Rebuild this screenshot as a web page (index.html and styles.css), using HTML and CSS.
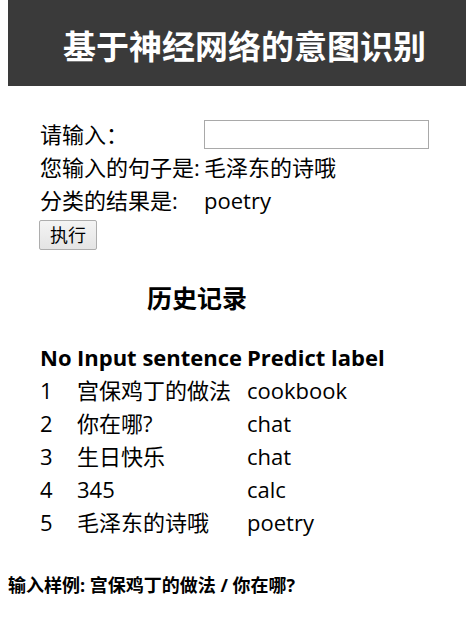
FILE: index.html
```html
<!DOCTYPE html>
<html lang="zh-CN">
<head>
<meta charset="utf-8">
<title>基于神经网络的意图识别</title>
<link rel="stylesheet" href="styles.css">
</head>
<body>
<header class="banner">
  <h1 class="banner-title">基于神经网络的意图识别</h1>
</header>
<main class="content">
  <table class="form-table">
    <tr class="form-row form-row-input">
      <td class="form-label">请输入：</td>
      <td class="form-value"><input class="text-input" type="text"></td>
    </tr>
    <tr class="form-row">
      <td class="form-label">您输入的句子是:</td>
      <td class="form-value">毛泽东的诗哦</td>
    </tr>
    <tr class="form-row">
      <td class="form-label">分类的结果是:</td>
      <td class="form-value">poetry</td>
    </tr>
  </table>
  <button class="run-btn" type="button">执行</button>
  <h2 class="history-title">历史记录</h2>
  <table class="history-table">
    <thead>
      <tr>
        <th class="col-no">No</th>
        <th class="col-input">Input sentence</th>
        <th class="col-label">Predict label</th>
      </tr>
    </thead>
    <tbody>
      <tr><td>1</td><td>宫保鸡丁的做法</td><td>cookbook</td></tr>
      <tr><td>2</td><td>你在哪?</td><td>chat</td></tr>
      <tr><td>3</td><td>生日快乐</td><td>chat</td></tr>
      <tr><td>4</td><td>345</td><td>calc</td></tr>
      <tr><td>5</td><td>毛泽东的诗哦</td><td>poetry</td></tr>
    </tbody>
  </table>
</main>
<p class="sample">输入样例: 宫保鸡丁的做法 / 你在哪?</p>
</body>
</html>
```

FILE: styles.css
```css
html, body {
  background: #ffffff;
}

body {
  margin: 0 0 8px 8px;
  font-family: "Open Sans", "Noto Sans CJK SC", sans-serif;
  color: #000000;
}

.banner {
  background: #3a3a3a;
  height: 86px;
  display: flex;
  align-items: center;
  padding-left: 55px;
}

.banner-title {
  margin: 0;
  font-size: 33px;
  line-height: 40px;
  font-weight: 700;
  color: #ffffff;
  position: relative;
  top: 4px;
}

.content {
  padding: 31px 0 0 32px;
}

.form-table,
.history-table {
  border-collapse: collapse;
  border-spacing: 0;
  font-size: 22px;
}

.form-table td {
  padding: 0;
  line-height: 33px;
  height: 33px;
  vertical-align: middle;
}

.form-row-input td {
  height: 34px;
}

.form-label {
  width: 164px;
  white-space: nowrap;
}

.form-value {
  white-space: nowrap;
}

.text-input {
  display: block;
  box-sizing: border-box;
  width: 225px;
  height: 29px;
  margin: 0;
  border: 1px solid #a9a9a9;
  background: #ffffff;
  padding: 0 4px;
  font: inherit;
  font-size: 16px;
}

.run-btn {
  display: block;
  box-sizing: border-box;
  margin: 3px 0 0 -1px;
  height: 30px;
  padding: 0 10px;
  border: 1px solid #adadad;
  border-radius: 2px;
  background: linear-gradient(#f4f4f4, #e4e4e4);
  font-family: "Open Sans", "Noto Sans CJK SC", sans-serif;
  font-size: 18px;
  line-height: 26px;
  color: #000000;
}

.history-title {
  margin: 30px 0 0 107px;
  font-size: 25px;
  line-height: 36px;
  font-weight: 700;
}

.history-table {
  margin-top: 25px;
}

.history-table th,
.history-table td {
  padding: 0;
  line-height: 33px;
  height: 33px;
  text-align: left;
  white-space: nowrap;
  vertical-align: middle;
}

.history-table th {
  font-weight: 700;
}

.col-no {
  width: 37px;
}

.col-input {
  width: 170px;
}

.sample {
  margin: 34px 0 0 0;
  font-size: 18px;
  line-height: 24px;
  font-weight: 700;
}
```
